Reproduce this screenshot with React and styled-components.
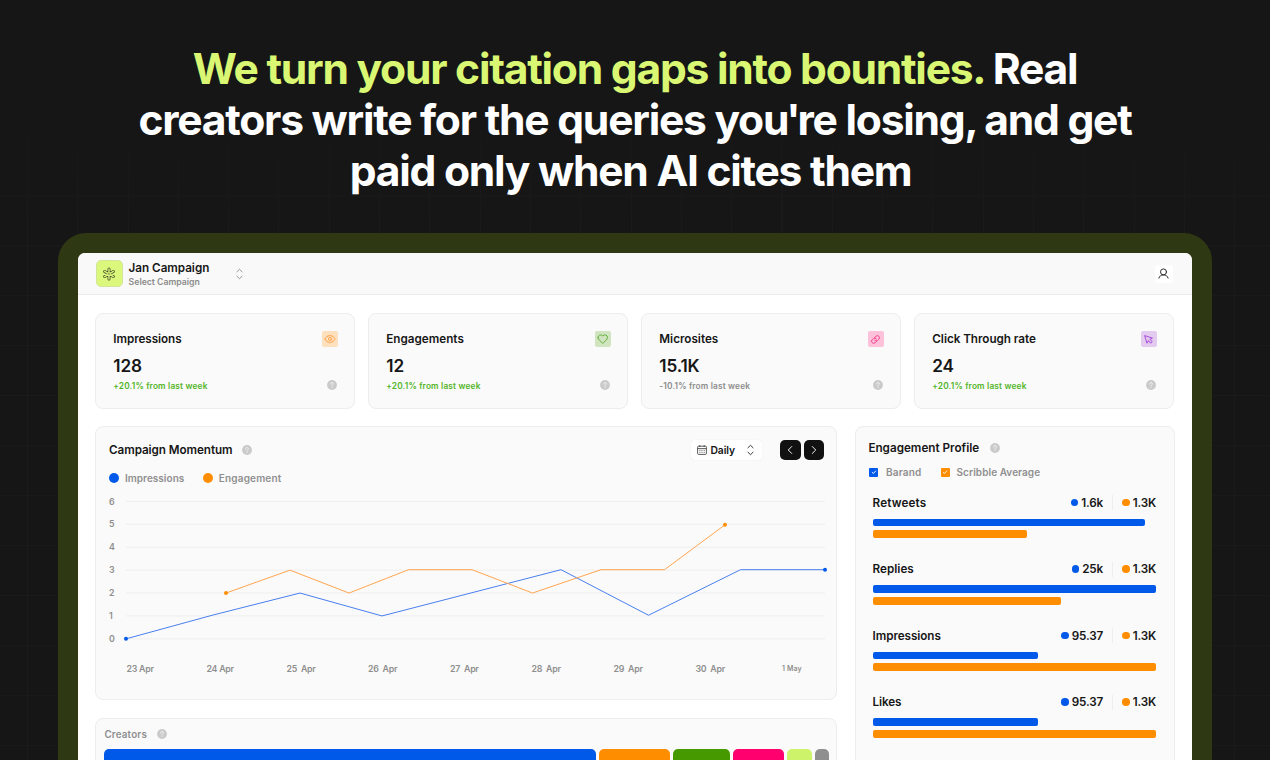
import React from 'react';
import styled, { createGlobalStyle } from 'styled-components';
import { ChevronLeft, ChevronRight, Heart, Eye } from 'lucide-react';

//============================================================================
// GLOBAL STYLES
//============================================================================

const GlobalStyle = createGlobalStyle`
  * {
    box-sizing: border-box;
  }

  body {
    margin: 0;
    background: #161616;
    font-family: 'Inter', sans-serif;
    color: #161616;
    overflow: hidden;
  }

  svg {
    display: block;
    flex: none;
  }
`;

//============================================================================
// STYLED COMPONENTS - PAGE
//============================================================================

const Page = styled.main`
  height: 760px;
  overflow: hidden;
  display: flex;
  flex-direction: column;
  align-items: center;
  padding-top: 43px;
  background-color: #161616;
  background-image: linear-gradient(180deg, #161616 100px, rgba(22, 22, 22, 0.3) 230px),
    repeating-linear-gradient(90deg, transparent 0 27px, #1c1c1c 27px 28px, transparent 28px 50.3px),
    repeating-linear-gradient(180deg, transparent 0 45px, #1c1c1c 45px 46px, transparent 46px 50px);
`;

const Headline = styled.h1`
  width: 1040px;
  margin: 0 0 37px;
  font-size: 42.6px;
  font-weight: 700;
  line-height: 51px;
  letter-spacing: -1.26px;
  text-align: center;
  color: #ffffff;
`;

const Highlight = styled.span`
  color: #daf773;
`;

/**
 * Pulls punctuation closer to its neighbours at display size.
 */
const Tight = styled.span`
  letter-spacing: -3.2px;
`;

/**
 * The translucent green bezel round the dashboard.
 */
const Frame = styled.div`
  width: 1154px;
  height: 900px;
  flex: none;
  padding: 20px 20px 0;
  border-radius: 28px;
  background: #2e3813;
`;

const Dashboard = styled.div`
  height: 100%;
  border-radius: 7px 7px 0 0;
  background: #ffffff;
  overflow: hidden;
`;

//============================================================================
// STYLED COMPONENTS - TOP BAR
//============================================================================

const TopBar = styled.header`
  height: 42px;
  display: flex;
  align-items: center;
  padding: 0 19.5px 0 17.5px;
  background: #f9f9f9;
  border-bottom: 1px solid #ebebeb;
`;

const CampaignLogo = styled.div`
  width: 27px;
  height: 27px;
  display: grid;
  place-items: center;
  border: 1px solid #d3e596;
  border-radius: 5px;
  background: #dcf87c;
`;

const CampaignText = styled.div`
  width: 107px;
  margin-left: 6.1px;
  padding-top: 2.5px;
`;

const CampaignName = styled.div`
  font-size: 11.7px;
  font-weight: 600;
  line-height: 16px;
  letter-spacing: -0.03px;
`;

const CampaignHint = styled.div`
  font-size: 8.7px;
  font-weight: 600;
  line-height: 13px;
  letter-spacing: 0;
  color: #8c8c8c;
`;

const UserButton = styled.button`
  width: 18px;
  height: 18px;
  margin-left: auto;
  padding: 0;
  display: grid;
  place-items: center;
  border: none;
  border-radius: 3px;
  background: #ffffff;
  color: #222222;
`;

//============================================================================
// STYLED COMPONENTS - CARDS
//============================================================================

const Content = styled.div`
  padding: 18px 17px;
`;

const StatGrid = styled.section`
  display: grid;
  grid-template-columns: repeat(4, 260px);
  gap: 13px;
  margin-bottom: 17.5px;
`;

const Card = styled.section`
  border: 1px solid #ededed;
  border-radius: 8px;
  background: #fafafa;
`;

const StatCard = styled(Card)`
  height: 95.5px;
  padding: 16.5px 16px 0 17.3px;
`;

const StatHead = styled.div`
  height: 17px;
  display: flex;
  align-items: center;
  justify-content: space-between;
`;

const Title = styled.h2`
  margin: 0;
  font-size: 11.7px;
  font-weight: 600;
  line-height: 17px;
  letter-spacing: ${(p) => p.$tracking || '0'};
`;

const StatIcon = styled.span`
  width: 16.5px;
  height: 16.5px;
  display: grid;
  place-items: center;
  border-radius: 2px;
  background: ${(p) => p.$tint};
  color: ${(p) => p.$color};
`;

const StatValue = styled.div`
  margin: 7.5px 0 3px;
  font-size: 17.2px;
  font-weight: 600;
  line-height: 22px;
  letter-spacing: -0.15px;
`;

const StatFoot = styled.div`
  display: flex;
  align-items: flex-start;
  justify-content: space-between;
  padding-right: 1px;
`;

const Change = styled.span`
  font-size: 8.3px;
  font-weight: 600;
  line-height: 12px;
  letter-spacing: ${(p) => (p.$up ? '0.18px' : '0.17px')};
  color: ${(p) => (p.$up ? '#52b526' : '#8c8c8c')};
`;

const Columns = styled.div`
  display: grid;
  grid-template-columns: 742px 320px;
  gap: 18px;
`;

const Column = styled.div`
  display: flex;
  flex-direction: column;
  gap: 18px;
`;

//============================================================================
// STYLED COMPONENTS - CAMPAIGN MOMENTUM
//============================================================================

const MomentumCard = styled(Card)`
  height: 274px;
  padding: 12px 12px 0 13px;
`;

const MomentumHead = styled.div`
  height: 22px;
  display: flex;
  align-items: center;
  gap: 9.5px;
`;

const PeriodSelect = styled.div`
  width: 71px;
  height: 20px;
  margin-left: auto;
  padding: 0 8px 0 6px;
  display: flex;
  align-items: center;
  border-radius: 4px;
  background: #ffffff;
  box-shadow: 0 0 1px #dddddd;
  font-size: 10.3px;
  font-weight: 600;
  letter-spacing: -0.08px;
`;

const PeriodLabel = styled.span`
  flex: 1;
  margin-left: 4px;
`;

const Pager = styled.div`
  display: flex;
  gap: 3px;
  margin-left: 9px;
`;

const PagerButton = styled.button`
  width: 20.5px;
  height: 20.5px;
  padding: 0;
  display: grid;
  place-items: center;
  border: none;
  border-radius: 5px;
  background: #111111;
  color: #ffffff;
`;

const Legend = styled.div`
  height: 16px;
  margin-top: 9px;
  display: flex;
  gap: 18.5px;
`;

const LegendItem = styled.div`
  display: flex;
  align-items: center;
  gap: ${(p) => p.$gap || '6px'};
  font-size: 10px;
  font-weight: 600;
  letter-spacing: ${(p) => p.$tracking};
  color: #8f8f8f;
`;

const Dot = styled.span`
  flex: none;
  width: ${(p) => p.$size};
  height: ${(p) => p.$size};
  border-radius: 50%;
  background: ${(p) => p.$color};
`;

const Plot = styled.div`
  display: flex;
  margin-top: 4px;
`;

const YAxis = styled.div`
  flex: none;
  width: 17px;
  padding-top: 0.5px;
  font-size: 8.8px;
  font-weight: 600;
  line-height: 22.9px;
  color: #8f8f8f;
`;

const XAxis = styled.div`
  display: grid;
  grid-template-columns: 80px 80px 81.5px 82px 81.5px 82px 82px 86.5px auto;
  align-items: center;
  height: 12px;
  margin: 12px 0 0 17.5px;
  font-size: 8.8px;
  font-weight: 600;
  letter-spacing: -0.25px;
  white-space: pre;
  color: #8f8f8f;
`;

const LastTick = styled.span`
  font-size: 7px;
  letter-spacing: 0.08px;
`;

//============================================================================
// STYLED COMPONENTS - CREATORS
//============================================================================

const CreatorsCard = styled(Card)`
  height: 120px;
  padding: 7.5px 8.4px;
`;

const CreatorsHead = styled.div`
  height: 15px;
  display: flex;
  align-items: center;
  gap: 10px;
  font-size: 9.8px;
  font-weight: 600;
  letter-spacing: 0.2px;
  color: #8f8f8f;
`;

const ShareBar = styled.div`
  display: flex;
  gap: 3px;
  margin-top: 7.5px;
`;

const ShareSegment = styled.span`
  flex: none;
  width: ${(p) => p.$width}px;
  height: 30px;
  border-radius: 5px;
  background: ${(p) => p.$color};
`;

//============================================================================
// STYLED COMPONENTS - ENGAGEMENT PROFILE
//============================================================================

const ProfileCard = styled(Card)`
  padding: 12.5px 12px 0 12.4px;
`;

const ProfileHead = styled.div`
  display: flex;
  align-items: center;
  gap: 10.5px;
`;

const ProfileLegend = styled(Legend)`
  margin: 7.5px 0 14.5px 1px;
  gap: 19px;
`;

const Checkbox = styled.span`
  width: 9px;
  height: 9px;
  display: grid;
  place-items: center;
  border-radius: 1px;
  background: ${(p) => p.$color};
`;

const Metric = styled.div`
  height: 66.5px;
  padding: 0 6px 0 4.2px;
`;

const MetricHead = styled.div`
  height: 16px;
  display: flex;
  align-items: center;
  font-size: 11.7px;
  font-weight: 600;
  line-height: 16px;
`;

const MetricName = styled.span`
  flex: 1;
  letter-spacing: ${(p) => p.$tracking};
`;

const MetricValue = styled.span`
  display: flex;
  align-items: center;
  gap: 3px;
  letter-spacing: -0.2px;
`;

const MetricDivider = styled.span`
  width: 1px;
  height: 15px;
  margin: 0 9px 0 9.3px;
  background: #eeeeee;
`;

const Bars = styled.div`
  display: grid;
  gap: 4px;
  margin-top: 8px;
`;

const Bar = styled.span`
  width: ${(p) => p.$width}px;
  height: 7.8px;
  border-radius: 2px;
  background: ${(p) => p.$color};
`;

//============================================================================
// ICONS
//============================================================================

const HelpIcon = () => (
  <svg width="10" height="10" viewBox="0 0 10 10" fill="none">
    <circle cx="5" cy="5" r="4.9" fill="#cacaca" />
    <path
      d="M3.6 4C3.6 3.1 4.2 2.6 5 2.6S6.4 3.1 6.4 3.9C6.4 4.8 5 4.8 5 5.8M5 7v.5"
      stroke="#f7f7f7"
      strokeWidth="0.8"
      strokeLinecap="round"
    />
  </svg>
);

const SelectIcon = ({ color }) => (
  <svg width="7" height="12" viewBox="0 0 7 12" fill="none" stroke={color} strokeWidth="0.9">
    <path d="M0.9 3.8 3.5 1.3 6.1 3.8M0.9 8.2 3.5 10.7 6.1 8.2" strokeLinecap="round" strokeLinejoin="round" />
  </svg>
);

const ARMS = 'M7 1.9v10.2M2.6 4.45l8.8 5.1M2.6 9.55l8.8-5.1';

const AsteriskIcon = () => (
  <svg width="14" height="14" viewBox="0 0 14 14" fill="none" strokeLinecap="round">
    <path d={ARMS} stroke="#4c5530" strokeWidth="3" />
    <path d={ARMS} stroke="#dcf87c" strokeWidth="1.4" />
    <circle cx="7" cy="7" r="0.8" fill="#59643a" />
  </svg>
);

const UserIcon = () => (
  <svg width="11" height="11" viewBox="0 0 11 11" fill="none" stroke="currentColor" strokeLinecap="round">
    <circle cx="5.5" cy="3.9" r="3" strokeWidth="0.95" />
    <path d="M0.9 10.1C1.4 8 3.1 6.9 5.5 6.9s4.1 1.1 4.6 3.2" strokeWidth="0.95" />
  </svg>
);

const LinkIcon = () => (
  <svg width="11" height="11" viewBox="0 0 11 11" fill="none" stroke="currentColor" strokeWidth="0.9">
    <g transform="rotate(-42 5.5 5.5)" strokeLinecap="round">
      <path d="M5 7.6H3a2.1 2.1 0 0 1 0-4.2h1.6a2.1 2.1 0 0 1 2 2.1" />
      <path d="M6 3.4h2a2.1 2.1 0 0 1 0 4.2H6.4a2.1 2.1 0 0 1-2-2.1" />
    </g>
  </svg>
);

const CursorIcon = () => (
  <svg width="11" height="11" viewBox="0 0 11 11" fill="none" stroke="currentColor" strokeWidth="0.9">
    <path d="M1.6 1.6 4 9.2 5.4 6.6 7.6 9.2 9.3 7.6 6.8 5.4 9.4 4.1Z" strokeLinejoin="round" />
  </svg>
);

const CalendarIcon = () => (
  <svg width="10" height="10" viewBox="0 0 10 10" fill="none" stroke="#333333" strokeWidth="0.8">
    <rect x="0.6" y="1.2" width="8.8" height="8.2" rx="1" />
    <path d="M0.6 3.6h8.8M2.8 0.2v1.8M7.2 0.2v1.8" />
    <path d="M2.4 5.4h1M4.5 5.4h1M6.7 5.4h1M2.4 7.3h1M4.5 7.3h1M6.7 7.3h1" />
  </svg>
);

const CheckIcon = () => (
  <svg width="6" height="6" viewBox="0 0 6 6" fill="none" stroke="#ffffff" strokeWidth="0.9">
    <path d="M1 3.2 2.4 4.5 5 1.6" />
  </svg>
);

//============================================================================
// DATA
//============================================================================

const BLUE = '#0059e8';
const ORANGE = '#ff8d00';

const stats = [
  { title: 'Impressions', tracking: '-0.06px', value: '128', change: '+20.1% from last week', up: true, tint: '#fde0bd', color: '#ff9a3c', icon: <Eye size={12} strokeWidth={1.7} /> },
  { title: 'Engagements', value: '12', change: '+20.1% from last week', up: true, tint: '#d0e5bf', color: '#55a62c', icon: <Heart size={11.5} strokeWidth={1.8} /> },
  { title: 'Microsites', value: '15.1K', change: '-10.1% from last week', up: false, tint: '#fdc2da', color: '#f43f8e', icon: <LinkIcon /> },
  { title: 'Click Through rate', tracking: '-0.04px', value: '24', change: '+20.1% from last week', up: true, tint: '#e2cbee', color: '#a33fd6', icon: <CursorIcon /> },
];

const ticks = ['23 Apr', '24 Apr', '25  Apr', '26  Apr', '27  Apr', '28  Apr', '29  Apr', '30  Apr'];

const impressions = [[0, 0], [87, 1.04], [174, 2], [256, 1], [435, 3.02], [522.5, 1.03], [614.5, 3.02], [699, 3.02]];
const engagement = [[100, 2], [164, 3], [223, 2], [282.5, 3.02], [346, 3.02], [406.5, 2], [475, 3.02], [538.5, 3.02], [599, 4.98]];

const metrics = [
  { name: 'Retweets', tracking: '0.12px', own: '1.6k', bars: [272, 154] },
  { name: 'Replies', tracking: '0', own: '25k', bars: [283, 188] },
  { name: 'Impressions', tracking: '-0.07px', own: '95.37', bars: [165.5, 283] },
  { name: 'Likes', tracking: '-0.15px', own: '95.37', bars: [165.5, 283] },
];

const shares = [
  [491.5, BLUE],
  [71, ORANGE],
  [57, '#479900'],
  [51, '#ff006e'],
  [25, '#cdf36b'],
  [14, '#8f8f8f'],
];

//============================================================================
// CHART
//============================================================================

const STEP = 22.9;
const toY = (v) => STEP / 2 + (6 - v) * STEP;
const toPoints = (series) => series.map(([x, v]) => `${x},${toY(v)}`).join(' ');

const MomentumChart = () => (
  <svg width="699" height={STEP * 7} overflow="visible" fill="none">
    {[0, 1, 2, 3, 4, 5, 6].map((v) => (
      <line key={v} x1="0" x2="699" y1={toY(v)} y2={toY(v)} stroke="#eeeeee" />
    ))}
    <polyline points={toPoints(impressions)} stroke="#3f78ee" strokeWidth="0.95" strokeLinejoin="round" />
    <polyline points={toPoints(engagement)} stroke="#ffa047" strokeWidth="0.95" strokeLinejoin="round" />
    <circle cx="0" cy={toY(0)} r="2" fill={BLUE} />
    <circle cx="699" cy={toY(3.02)} r="2" fill={BLUE} />
    <circle cx="100" cy={toY(2)} r="2" fill={ORANGE} />
    <circle cx="599" cy={toY(4.98)} r="2" fill={ORANGE} />
  </svg>
);

//============================================================================
// MAIN COMPONENT
//============================================================================

const App = () => {
  return (
    <Page>
      <GlobalStyle />
      <Headline>
        <Highlight>We turn your citation gaps into bounties.</Highlight> Real
        <br />
        creators write for the queries yo<Tight>u'</Tight>re losing<Tight>,</Tight> and get
        <br />
        paid only when AI cites them&nbsp;
      </Headline>
      <Frame>
        <Dashboard>
          <TopBar>
            <CampaignLogo>
              <AsteriskIcon />
            </CampaignLogo>
            <CampaignText>
              <CampaignName>Jan Campaign</CampaignName>
              <CampaignHint>Select Campaign</CampaignHint>
            </CampaignText>
            <SelectIcon color="#8a8a8a" />
            <UserButton aria-label="Account">
              <UserIcon />
            </UserButton>
          </TopBar>
          <Content>
            <StatGrid>
              {stats.map((s) => (
                <StatCard key={s.title}>
                  <StatHead>
                    <Title $tracking={s.tracking}>{s.title}</Title>
                    <StatIcon $tint={s.tint} $color={s.color}>{s.icon}</StatIcon>
                  </StatHead>
                  <StatValue>{s.value}</StatValue>
                  <StatFoot>
                    <Change $up={s.up}>{s.change}</Change>
                    <HelpIcon />
                  </StatFoot>
                </StatCard>
              ))}
            </StatGrid>
            <Columns>
              <Column>
                <MomentumCard>
                  <MomentumHead>
                    <Title $tracking="-0.07px">Campaign Momentum</Title>
                    <HelpIcon />
                    <PeriodSelect>
                      <CalendarIcon />
                      <PeriodLabel>Daily</PeriodLabel>
                      <SelectIcon color="#222222" />
                    </PeriodSelect>
                    <Pager>
                      <PagerButton aria-label="Previous">
                        <ChevronLeft size={14} strokeWidth={1.6} />
                      </PagerButton>
                      <PagerButton aria-label="Next">
                        <ChevronRight size={14} strokeWidth={1.6} />
                      </PagerButton>
                    </Pager>
                  </MomentumHead>
                  <Legend>
                    <LegendItem $tracking="0.03px">
                      <Dot $size="10px" $color={BLUE} />
                      Impressions
                    </LegendItem>
                    <LegendItem $tracking="0.17px">
                      <Dot $size="10px" $color={ORANGE} />
                      Engagement
                    </LegendItem>
                  </Legend>
                  <Plot>
                    <YAxis>
                      {[6, 5, 4, 3, 2, 1, 0].map((v) => (
                        <div key={v}>{v}</div>
                      ))}
                    </YAxis>
                    <MomentumChart />
                  </Plot>
                  <XAxis>
                    {ticks.map((t) => (
                      <span key={t}>{t}</span>
                    ))}
                    <LastTick>1 May</LastTick>
                  </XAxis>
                </MomentumCard>
                <CreatorsCard>
                  <CreatorsHead>
                    Creators
                    <HelpIcon />
                  </CreatorsHead>
                  <ShareBar>
                    {shares.map(([width, color]) => (
                      <ShareSegment key={color} $width={width} $color={color} />
                    ))}
                  </ShareBar>
                </CreatorsCard>
              </Column>
              <ProfileCard>
                <ProfileHead>
                  <Title>Engagement Profile</Title>
                  <HelpIcon />
                </ProfileHead>
                <ProfileLegend>
                  <LegendItem $gap="7.5px" $tracking="0.22px">
                    <Checkbox $color={BLUE}>
                      <CheckIcon />
                    </Checkbox>
                    Barand
                  </LegendItem>
                  <LegendItem $gap="7px" $tracking="0.07px">
                    <Checkbox $color={ORANGE}>
                      <CheckIcon />
                    </Checkbox>
                    Scribble Average
                  </LegendItem>
                </ProfileLegend>
                {metrics.map((m) => (
                  <Metric key={m.name}>
                    <MetricHead>
                      <MetricName $tracking={m.tracking}>{m.name}</MetricName>
                      <MetricValue>
                        <Dot $size="7.5px" $color={BLUE} />
                        {m.own}
                      </MetricValue>
                      <MetricDivider />
                      <MetricValue>
                        <Dot $size="7.5px" $color={ORANGE} />
                        1.3K
                      </MetricValue>
                    </MetricHead>
                    <Bars>
                      <Bar $width={m.bars[0]} $color={BLUE} />
                      <Bar $width={m.bars[1]} $color={ORANGE} />
                    </Bars>
                  </Metric>
                ))}
              </ProfileCard>
            </Columns>
          </Content>
        </Dashboard>
      </Frame>
    </Page>
  );
};

export default App;
